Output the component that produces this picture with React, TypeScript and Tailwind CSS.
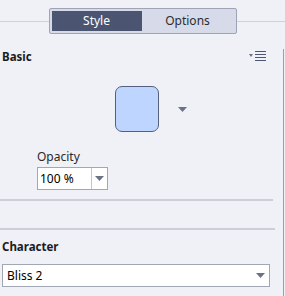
import React from 'react';

function Caret({ className = '' }: { className?: string }) {
  return (
    <svg width="9" height="5" viewBox="0 0 9 5" className={className}>
      <path d="M0 0h9L4.5 5z" fill="#6b7186" />
    </svg>
  );
}

export default function App() {
  return (
    <div
      className="w-[285px] h-[296px] bg-[#f0f0f7] text-[#1c1c1c] text-[12px] overflow-hidden"
      style={{ fontFamily: '"Noto Sans", "Open Sans", sans-serif' }}
    >
      {/* Tabs */}
      <div className="flex items-center h-[42px]">
        <div className="flex-1 h-px bg-[#cfd0da]" />
        <div className="flex w-[188px] h-[26px] p-[2px] bg-[#d7dbe9] border border-[#9ea3b6] rounded-[2px]">
          <div className="w-[90px] flex items-center justify-center bg-[#4b5571] text-white text-[12px]">Style</div>
          <div className="flex-1 flex items-center justify-center text-[#2c2c34] text-[12px]">Options</div>
        </div>
        <div className="flex-1 h-px bg-[#cfd0da]" />
      </div>

      {/* Panel */}
      <div className="mt-[13px] mr-px border-r border-[#9a9eb0] h-[250px]">
        <div className="-mt-[6px] flex items-center justify-between pl-[2px] pr-[17px] h-[16px]">
          <span className="font-bold text-[11.5px] leading-none">Basic</span>
          <div className="flex items-center gap-[2px] -mt-[3px]">
            <svg width="4" height="3" viewBox="0 0 4 3">
              <path d="M0 0h4L2 3z" fill="#6b7186" />
            </svg>
            <svg width="11" height="10" viewBox="0 0 11 10">
              <path d="M0 0.5h11M0 3.5h11M0 6.5h11M0 9.5h11" stroke="#4f5672" strokeWidth="1" />
            </svg>
          </div>
        </div>

        <div className="flex items-center mt-[21px] pl-[115px]">
          <div className="w-[44px] h-[46px] rounded-[7px] bg-[#bed5ff] border border-[#56607c]" />
          <Caret className="ml-[19px]" />
        </div>

        <div className="pl-[37px] mt-[18px]">
          <div className="leading-[14px] text-[#2a2a2a]">Opacity</div>
          <div className="mt-[3px] flex w-[71px] h-[23px] bg-white border border-[#a3a6b4]">
            <div className="flex-1 flex items-center pl-[2px] text-[12px] text-black">100 %</div>
            <div className="w-[16px] border-l border-[#c3c5ce] flex items-center justify-center">
              <Caret />
            </div>
          </div>
        </div>

        <div className="mt-[9px] w-[273px] h-[2px] bg-[#cdced8]" />
        <div className="mt-[27px] w-[275px] h-[2px] bg-[#cdced8]" />

        <div className="mt-[10px] pl-[2px] font-bold text-[11.5px] leading-[14px]">Character</div>
        <div className="mt-[10px] ml-[2px] flex w-[268px] h-[23px] bg-white border border-[#a3a6b4]">
          <div className="flex-1 flex items-center pl-[4px] text-black">Bliss 2</div>
          <div className="w-[18px] flex items-center justify-center">
            <Caret />
          </div>
        </div>
      </div>
    </div>
  );
}
